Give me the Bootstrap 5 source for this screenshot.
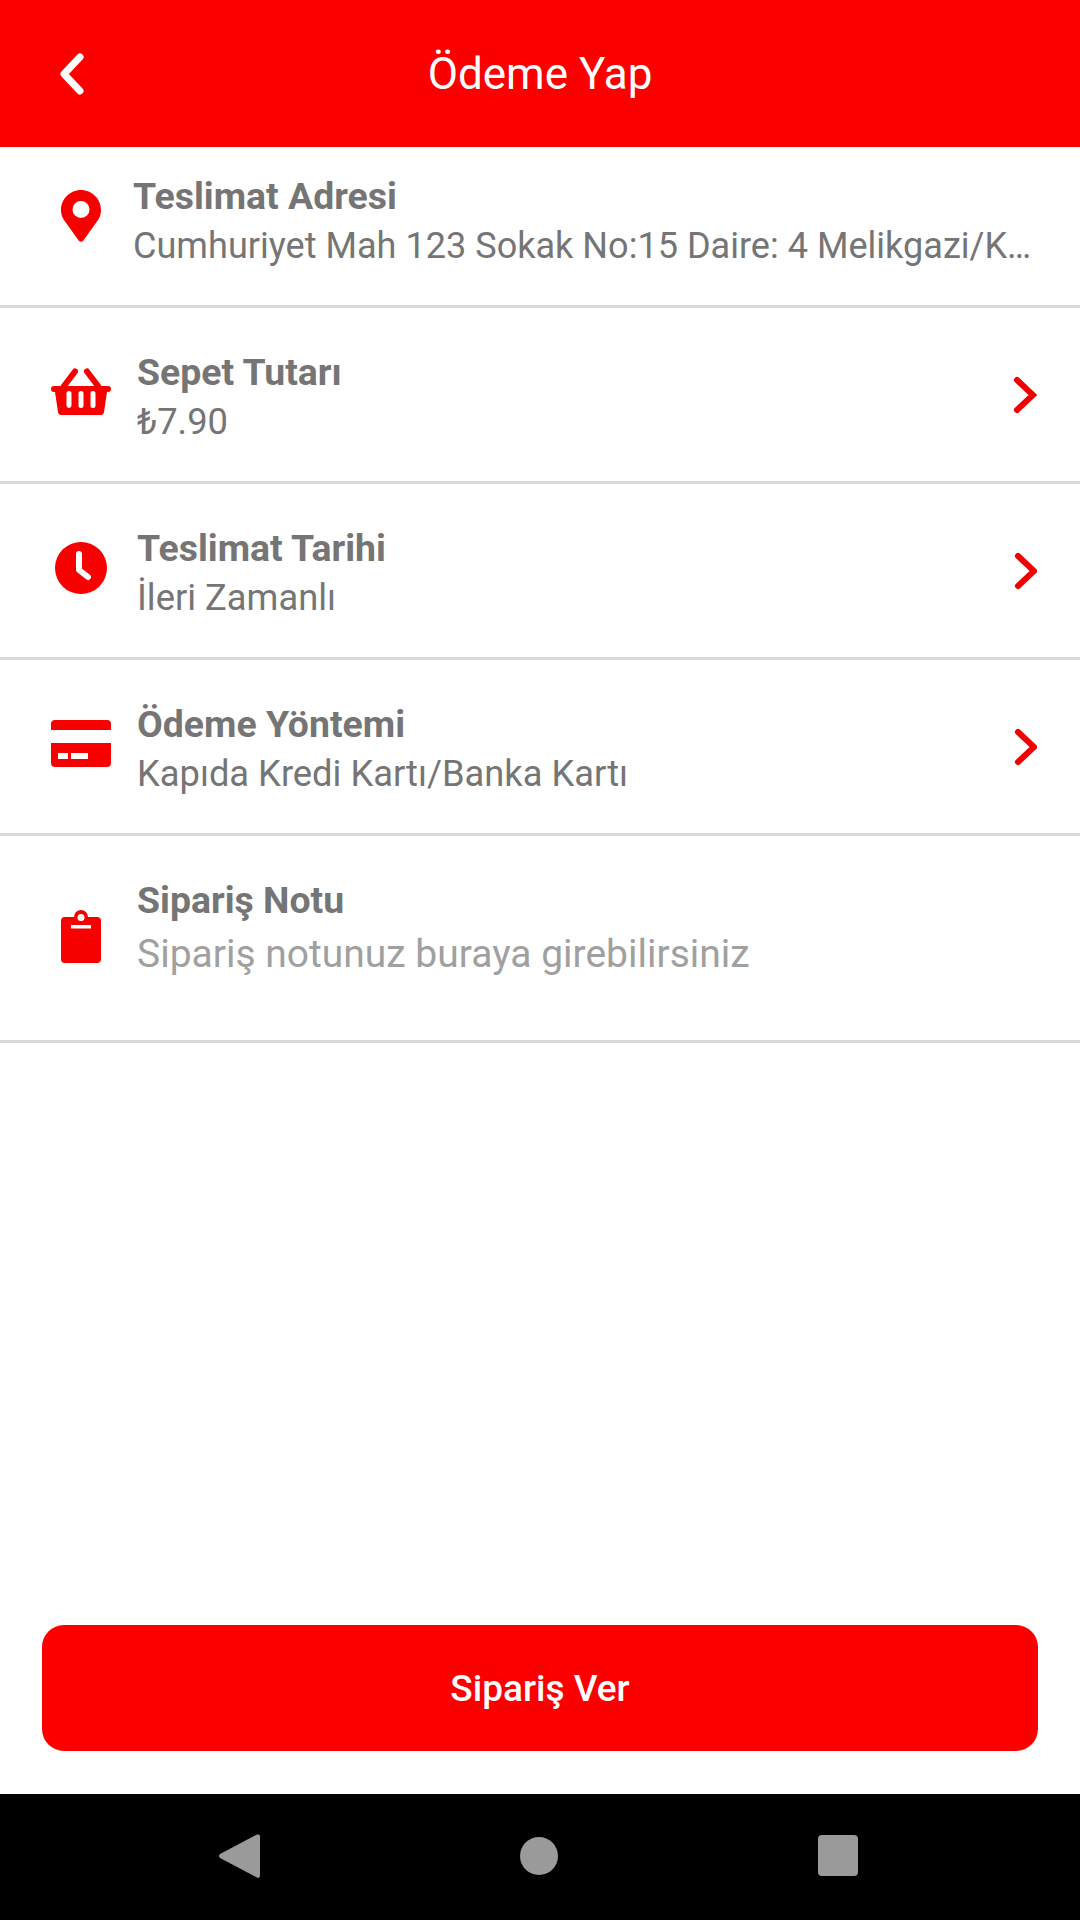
<!DOCTYPE html>
<html lang="tr">
<head>
  <meta charset="UTF-8" />
  <meta name="viewport" content="width=device-width, initial-scale=1.0"/>
  <title>Ödeme Yap</title>
  <link rel="stylesheet" href="https://cdn.jsdelivr.net/npm/bootstrap@5.3.0/dist/css/bootstrap.min.css">
  <style>
    body {
      font-family: Roboto, "Liberation Sans", sans-serif;
      background-color: #fff;
    }
    .ekran {
      height: 1920px;
    }
    .ust-bar {
      height: 147px;
      background-color: #fc0000;
      padding-left: 56px;
    }
    .ust-baslik {
      font-size: 44px;
      line-height: 1;
      color: #fff;
    }
    .satir.list-group-item {
      padding: 39px 43px 34px 51px;
      border-bottom: 3px solid #d9d9d9;
      color: #757575;
    }
    .list-group-flush > .satir.list-group-item:last-child {
      border-bottom-width: 3px;
    }
    .satir.ilk {
      padding-top: 24px;
      padding-right: 44px;
    }
    .satir.not-satiri {
      padding-top: 39px;
      padding-bottom: 61px;
    }
    .ikon-kutu {
      width: 60px;
      margin-right: 26px;
      color: #f60000;
    }
    .ilk .ikon-kutu {
      margin-right: 22px;
    }
    .yukari {
      margin-bottom: 11px;
    }
    .asagi {
      margin-top: 18px;
    }
    .satir-baslik {
      font-size: 37.4px;
      line-height: 50px;
      font-weight: 700;
    }
    .satir-metin {
      font-size: 36.3px;
      line-height: 50px;
    }
    .adres-metin {
      font-size: 36.1px;
    }
    .not-metin {
      margin-top: 4px;
      font-size: 39px;
      color: #a0a0a0;
    }
    .siparis-btn.btn {
      height: 126px;
      padding-top: 8px;
      font-size: 37px;
      font-weight: 500;
      border: 0;
      border-radius: 22px;
      color: #fff;
      background-color: #fc0000;
    }
    .alt-kisim {
      padding: 0 42px 43px;
    }
    .sistem-bar {
      height: 126px;
      background-color: #000;
      padding: 0 222px 3px 219px;
    }
  </style>
</head>
<body>
  <div class="ekran d-flex flex-column">
    <!-- Baslik -->
    <header class="ust-bar position-relative d-flex align-items-center">
      <svg width="30" height="42" viewBox="0 0 30 42" aria-hidden="true"><path d="M24 4 8 21l16 17" fill="none" stroke="#fff" stroke-width="7" stroke-linecap="round" stroke-linejoin="round"/></svg>
      <div class="ust-baslik position-absolute top-50 start-50 translate-middle text-nowrap">Ödeme Yap</div>
    </header>

    <!-- Satirlar -->
    <div class="list-group list-group-flush">
      <div class="list-group-item satir ilk d-flex align-items-center">
        <div class="ikon-kutu yukari flex-shrink-0 d-flex justify-content-center">
          <svg width="40" height="52" viewBox="0 0 40 52" aria-hidden="true"><path fill="currentColor" fill-rule="evenodd" d="M20 0c11 0 20 9 20 20 0 4-1 7-3 10L22 51c-1 1-3 1-4 0L3 30c-2-3-3-6-3-10C0 9 9 0 20 0Zm0 11a8.500 8.500 0 1 0 0 17 8.500 8.500 0 0 0 0-17Z"/></svg>
        </div>
        <div class="flex-grow-1 overflow-hidden">
          <div class="satir-baslik">Teslimat Adresi</div>
          <div class="satir-metin adres-metin text-truncate">Cumhuriyet Mah 123 Sokak No:15 Daire: 4 Melikgazi/Kayseri</div>
        </div>
      </div>

      <div class="list-group-item satir d-flex align-items-center">
        <div class="ikon-kutu yukari flex-shrink-0 d-flex justify-content-center">
          <svg width="60" height="47" viewBox="0 0 60 47" aria-hidden="true"><path fill="currentColor" fill-rule="evenodd" d="M3 18h54a2.500 2.500 0 0 1 0 6h-1l-3 20c-.2 2-1.500 3-3 3H10c-1.500 0-2.800-1-3-3L4 24H3a2.500 2.500 0 0 1 0-6Zm15 5a2.500 2.500 0 0 0-2.500 2.500v12a2.500 2.500 0 0 0 5 0v-12A2.500 2.500 0 0 0 18 23Zm12 0a2.500 2.500 0 0 0-2.500 2.500v12a2.500 2.500 0 0 0 5 0v-12A2.500 2.500 0 0 0 30 23Zm12 0a2.500 2.500 0 0 0-2.500 2.500v12a2.500 2.500 0 0 0 5 0v-12A2.500 2.500 0 0 0 42 23Z"/><path d="M13 18 24 3.500M47 18 36 3.500" fill="none" stroke="currentColor" stroke-width="6" stroke-linecap="round"/></svg>
        </div>
        <div class="flex-grow-1">
          <div class="satir-baslik">Sepet Tutarı</div>
          <div class="satir-metin">₺7.90</div>
        </div>
        <svg class="flex-shrink-0 mb-1" width="24" height="38" viewBox="0 0 24 38" aria-hidden="true"><path d="M4 4l16 15L4 34" fill="none" stroke="#f00000" stroke-width="6" stroke-linecap="round" stroke-linejoin="miter"/></svg>
      </div>

      <div class="list-group-item satir d-flex align-items-center">
        <div class="ikon-kutu yukari flex-shrink-0 d-flex justify-content-center">
          <svg width="52" height="52" viewBox="0 0 52 52" aria-hidden="true"><circle cx="26" cy="26" r="26" fill="currentColor"/><path d="M24 12v16l9 7" fill="none" stroke="#fff" stroke-width="6" stroke-linecap="round" stroke-linejoin="round"/></svg>
        </div>
        <div class="flex-grow-1">
          <div class="satir-baslik">Teslimat Tarihi</div>
          <div class="satir-metin">İleri Zamanlı</div>
        </div>
        <svg class="flex-shrink-0 mb-1" width="24" height="38" viewBox="0 0 24 38" aria-hidden="true"><path d="M5 4l16 15L5 34" fill="none" stroke="#f00000" stroke-width="6" stroke-linecap="round" stroke-linejoin="miter"/></svg>
      </div>

      <div class="list-group-item satir d-flex align-items-center">
        <div class="ikon-kutu yukari flex-shrink-0 d-flex justify-content-center">
          <svg width="60" height="47" viewBox="0 0 60 47" aria-hidden="true"><path fill="currentColor" fill-rule="evenodd" d="M4 0h52a4 4 0 0 1 4 4v6H0V4a4 4 0 0 1 4-4ZM0 23h60v20a4 4 0 0 1-4 4H4a4 4 0 0 1-4-4Zm7 10v6h10v-6Zm13 0v6h17v-6Z"/></svg>
        </div>
        <div class="flex-grow-1">
          <div class="satir-baslik">Ödeme Yöntemi</div>
          <div class="satir-metin">Kapıda Kredi Kartı/Banka Kartı</div>
        </div>
        <svg class="flex-shrink-0 mb-1" width="24" height="38" viewBox="0 0 24 38" aria-hidden="true"><path d="M5 4l16 15L5 34" fill="none" stroke="#f00000" stroke-width="6" stroke-linecap="round" stroke-linejoin="miter"/></svg>
      </div>

      <div class="list-group-item satir not-satiri d-flex align-items-center">
        <div class="ikon-kutu asagi flex-shrink-0 d-flex justify-content-center">
          <svg width="40" height="53" viewBox="0 0 40 53" aria-hidden="true"><path fill="currentColor" fill-rule="evenodd" d="M13 7a7 7 0 0 1 14 0h9a4 4 0 0 1 4 4v38a4 4 0 0 1-4 4H4a4 4 0 0 1-4-4V11a4 4 0 0 1 4-4Zm7-3a3.500 3.500 0 1 0 0 7 3.500 3.500 0 0 0 0-7Zm-10 11v3.500h20V15Z"/></svg>
        </div>
        <div class="flex-grow-1">
          <div class="satir-baslik">Sipariş Notu</div>
          <div class="satir-metin not-metin">Sipariş notunuz buraya girebilirsiniz</div>
        </div>
      </div>
    </div>

    <!-- Buton -->
    <div class="alt-kisim mt-auto">
      <button class="btn siparis-btn w-100" type="button">Sipariş Ver</button>
    </div>

    <!-- Android gezinme cubugu -->
    <div class="sistem-bar d-flex align-items-center justify-content-between">
      <svg width="41" height="46" viewBox="0 0 41 46" aria-hidden="true"><path d="M39 1.500c1 0 2 .5 2 2v39c0 2-1.500 3-3 2L1 25c-1.300-1-1.300-3 0-4L36 2.500c1-.6 2-1 3-1Z" fill="#9a9a9a"/></svg>
      <svg width="38" height="38" viewBox="0 0 38 38" aria-hidden="true"><circle cx="19" cy="19" r="19" fill="#9a9a9a"/></svg>
      <svg width="40" height="41" viewBox="0 0 40 41" aria-hidden="true"><rect width="40" height="41" rx="4" fill="#9a9a9a"/></svg>
    </div>
  </div>

  <script src="https://cdn.jsdelivr.net/npm/bootstrap@5.3.0/dist/js/bootstrap.bundle.min.js"></script>
</body>
</html>
